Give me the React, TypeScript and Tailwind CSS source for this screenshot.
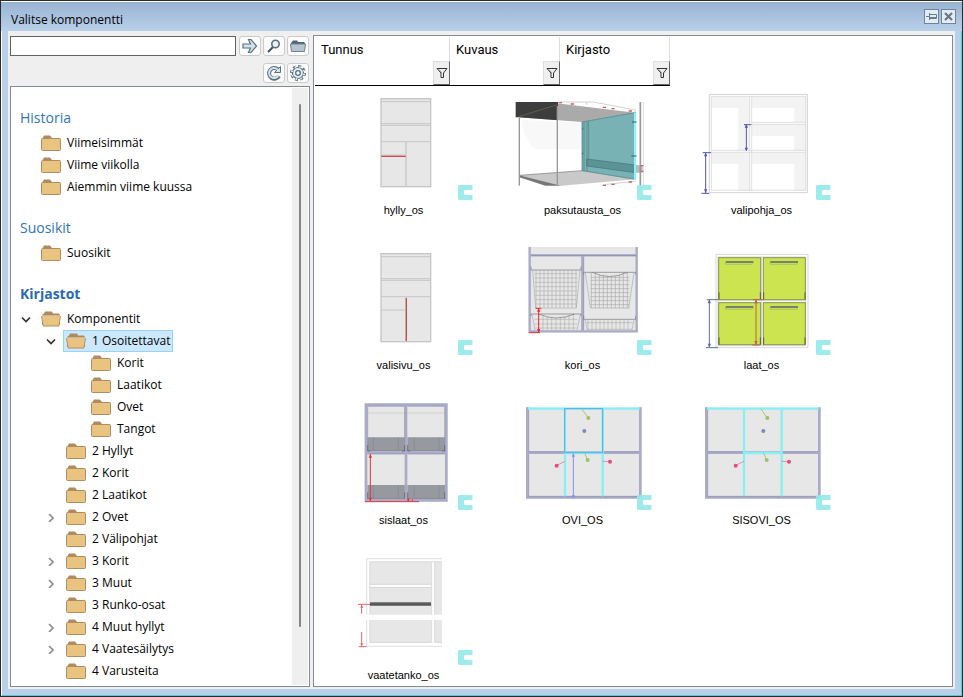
import type { ReactNode } from "react";

type TreeItem = {
  label: string;
  level: 0 | 1 | 2;
  state?: "open" | "closed";
  openFolder?: boolean;
  selected?: boolean;
};

const HISTORY: TreeItem[] = [
  { label: "Viimeisimmät", level: 0 },
  { label: "Viime viikolla", level: 0 },
  { label: "Aiemmin viime kuussa", level: 0 },
];

const FAVOURITES: TreeItem[] = [{ label: "Suosikit", level: 0 }];

const LIBRARIES: TreeItem[] = [
  { label: "Komponentit", level: 0, state: "open", openFolder: true },
  { label: "1 Osoitettavat", level: 1, state: "open", openFolder: true, selected: true },
  { label: "Korit", level: 2 },
  { label: "Laatikot", level: 2 },
  { label: "Ovet", level: 2 },
  { label: "Tangot", level: 2 },
  { label: "2 Hyllyt", level: 1 },
  { label: "2 Korit", level: 1 },
  { label: "2 Laatikot", level: 1 },
  { label: "2 Ovet", level: 1, state: "closed" },
  { label: "2 Välipohjat", level: 1 },
  { label: "3 Korit", level: 1, state: "closed" },
  { label: "3 Muut", level: 1, state: "closed" },
  { label: "3 Runko-osat", level: 1 },
  { label: "4 Muut hyllyt", level: 1, state: "closed" },
  { label: "4 Vaatesäilytys", level: 1, state: "closed" },
  { label: "4 Varusteita", level: 1 },
];

const INDENT = { 0: "pl-[5px]", 1: "pl-[30px]", 2: "pl-[55px]" };

function Folder({ open }: { open?: boolean }) {
  return (
    <svg width="20" height="16" viewBox="0 0 20 16" className="shrink-0">
      {open ? (
        <>
          <path d="M1 14V4L3 2.500L4 .5H11L12 2.500H18L19 4V14Z" fill="#ae8a60" />
          <path d="M0 5.500L1.500 4.500H18.500L20 5.500L18 15.500H2Z" fill="#b18c62" />
          <path d="M1 5.500H19L17.500 14.500H2.500Z" fill="#e9c480" />
          <path d="M1 5H19" stroke="#f6dfb4" />
        </>
      ) : (
        <>
          <path d="M1 4L3 .5H9L11 3H19V5H1Z" fill="#ae8a60" />
          <rect x=".5" y="3.500" width="19" height="12" rx="1" fill="#e9c480" stroke="#b18c62" />
        </>
      )}
    </svg>
  );
}

function Chevron({ state }: { state?: "open" | "closed" }) {
  if (!state) return null;
  return (
    <svg width="10" height="10" viewBox="0 0 10 10" fill="none" strokeWidth="1.7">
      {state === "open" ? (
        <path d="M1 3.500L5 7.500L9 3.500" stroke="#333" />
      ) : (
        <path d="M3 2L7 6L3 10" stroke="#8c8c8c" />
      )}
    </svg>
  );
}

function Tree({ items }: { items: TreeItem[] }) {
  return (
    <ul>
      {items.map((item) => (
        <li key={item.label} className={`flex h-[22px] items-center gap-0.5 ${INDENT[item.level]}`}>
          <span className="flex w-5 justify-center">
            <Chevron state={item.state} />
          </span>
          <button
            type="button"
            className={`flex h-[22px] items-center gap-1.5 border pr-0.5 pl-0.5 whitespace-nowrap ${
              item.selected ? "border-[#99d1ff] bg-[#cce8ff]" : "border-transparent"
            }`}
          >
            <Folder open={item.openFolder} />
            {item.label}
          </button>
        </li>
      ))}
    </ul>
  );
}

function Heading({ bold, children }: { bold?: boolean; children: ReactNode }) {
  return (
    <h2
      className={`flex h-11 items-center pt-4 pl-[9px] ${
        bold ? "text-sm font-bold text-[#2b69b5]" : "text-sm text-[#2f74bd]"
      }`}
    >
      {children}
    </h2>
  );
}

function ToolButton({ label, children }: { label: string; children: ReactNode }) {
  return (
    <button
      type="button"
      aria-label={label}
      className="flex h-5 w-[22px] shrink-0 items-center justify-center rounded-[3px] border border-[#cbcbcb] bg-[#fcfcfc]"
    >
      {children}
    </button>
  );
}

/* Thumbnails are drawn at three units to the pixel. */

function Cabinet({ red }: { red: "shelf" | "side" }) {
  return (
    <g fill="none" stroke="#c6c6c6" strokeWidth="3">
      <rect x="63" y="32" width="149" height="264" fill="#e7e7e7" strokeWidth="4" />
      <path d="M63 41H212M63 107H212M63 112H212M63 161H212" />
      <path d="M138 162V296" strokeWidth="4" />
      <path d="M63 201H138" />
      {red === "shelf" ? (
        <path d="M64 205H137" stroke="#d24a4d" strokeWidth="4" />
      ) : (
        <path d="M139 165V294" stroke="#cf4a50" strokeWidth="4" />
      )}
    </g>
  );
}

const Hylly = () => <Cabinet red="shelf" />;
const Valisivu = () => (
  <g transform="translate(0 9)">
    <Cabinet red="side" />
  </g>
);

const Paksutausta = () => (
  <g>
    <path d="M486 96L666 104V184H526Q496 160 486 110Z" fill="#f8f8f8" />
    <path d="M590 46L826 74L666 102L476 88Z" fill="#aaa" />
    <path d="M467 42H594V97L476 88H467Z" fill="#3d3d3d" />
    <path d="M476 86L592 50" stroke="#75695b" strokeWidth="2" />
    <path d="M478 262L666 248L826 274L604 293H590Z" fill="#c9c9c9" />
    <path d="M478 262L602 293H556L478 268Z" fill="#777" />
    <path d="M478 262L666 248" stroke="#777" strokeWidth="2" />
    <path d="M666 102L826 74V274L666 248Z" fill="#79b2b4" stroke="#3e777a" strokeWidth="2" />
    <path d="M680 213L826 231V254L680 234Z" fill="#5b9396" stroke="#3e777a" strokeWidth="2" />
    <path d="M828 230L848 233V254H828Z" fill="#bababa" />
    <path d="M672 102V248M681 100V250M686 100V214" stroke="#4b8486" strokeWidth="2" />
    <path d="M825 75V276" stroke="#82f6fa" strokeWidth="6" />
    <path d="M478 88V293M592 54V293" stroke="#989898" strokeWidth="4" />
    <path d="M841 42V293" stroke="#999" strokeWidth="5" />
    <path d="M850 42V293" stroke="#ccc" strokeWidth="2" />
    <path d="M600 42H700L826 66V74M680 42V50M730 290L826 280" fill="none" stroke="#bbb" strokeWidth="2" />
    <path d="M816 102H830M814 204H830M668 121V125M668 194V198" stroke="#355f70" strokeWidth="3" />
    <path
      d="M596 44H606M632 48H642M728 58H738M754 62H764M806 69H816M728 292H738M754 289H764M806 282H816M842 233H850M842 250H850"
      stroke="#d65c62"
      strokeWidth="4"
    />
  </g>
);

function Dimension({ d, arrows, color }: { d: string; arrows: string; color: string }) {
  return (
    <>
      <path d={d} fill="none" stroke={color} strokeWidth="3" />
      <path d={arrows} fill={color} stroke="none" />
    </>
  );
}

const Valipohja = () => (
  <g fill="none" stroke="#d2d2d2" strokeWidth="2">
    <path
      d="M64 25H180V188H145V60H64ZM186 25H348V103H313V60H186ZM186 109H348V188H313V144H186ZM64 194H180V308H145V228H64ZM186 194H348V308H313V228H186Z"
      fill="#f3f3f3"
      stroke="none"
    />
    <path d="M58 19H352V314H58Z" strokeWidth="3" />
    <path d="M64 25H347V307H64ZM179 25V307M185 25V307M185 103H347M185 109H347M64 187H347M64 193H347" />
    <Dimension
      color="#5256ac"
      d="M169 110V187M162 110H184M47 194V315M38 194H63M34 316H58"
      arrows="M169 108L174 119H164ZM169 190L174 179H164ZM47 194L52 205H42ZM47 315L52 304H42Z"
    />
  </g>
);

const Kori = () => (
  <g fill="none">
    <rect x="506" y="21" width="326" height="256" fill="#e7e7e7" />
    <path d="M509 21V274H830V21M509 46H830M667 46V274" stroke="#a9abc8" strokeWidth="7" />
    <path d="M513 46H828M671 50V270" stroke="#8284a5" strokeWidth="2" />
    <path
      d="M528 90V204M540 90V204M552 90V204M564 90V204M576 90V204M588 90V204M600 90V204M612 90V204M624 90V204M636 90V204M648 90V204M524 101H652M524 114H652M524 127H652M526 140H650M526 153H650M526 166H650M528 179H650M528 192H650M526 204H650"
      stroke="#b0b0b0"
      strokeWidth="2"
    />
    <path
      d="M694 98V204M706 98V204M718 104V204M730 108V204M742 108V204M754 108V204M766 108V204M778 104V204M790 98V204M802 98V204M692 112H808M692 121H808M692 134H808M692 146H808M692 158H808M692 170H808M692 182H808M692 194H808M692 204H808"
      stroke="#aaa"
      strokeWidth="2"
    />
    <path
      d="M536 222V270M549 225V270M562 230V270M575 232V270M588 234V270M601 232V270M614 230V270M627 225V270M640 222V270M524 238H652M524 252H652M526 264H650M684 240V270M696 240V270M708 240V270M720 240V270M732 240V270M744 240V270M756 240V270M768 240V270M780 240V270M792 240V270M804 240V270M680 248H818M680 268H816"
      stroke="#b0b0b0"
      strokeWidth="2"
    />
    <path
      d="M518 90L527 204M660 90L649 204M676 98L691 204M822 98L806 204M516 224L525 270M661 224L651 270M676 240L682 270M822 240L816 270"
      stroke="#aaa"
      strokeWidth="2"
    />
    <path
      d="M513 80V90H663V80M671 103V97H827V103M697 97Q748 122 802 97M513 228V222H663V228M536 222Q588 246 644 222M671 228V238H827V228"
      stroke="#777"
      strokeWidth="2"
    />
    <Dimension
      color="#f0282d"
      d="M536 206V277M527 205H544M506 278H540"
      arrows="M536 204L541 215H531ZM536 278L541 267H531Z"
    />
  </g>
);

function Drawer({ x, y }: { x: number; y: number }) {
  return (
    <g transform={`translate(${x} ${y})`} fill="none">
      <rect width="126" height="126" fill="#cce450" stroke="#8b9454" strokeWidth="3" />
      <path d="M1 104V126M125 104V126" stroke="#5b6139" strokeWidth="3" />
      <path d="M18 17L24 20H99L103 15" stroke="#b5c95b" strokeWidth="4" />
      <path d="M21 13H104" stroke="#77816f" strokeWidth="6" />
    </g>
  );
}

const Laat = () => (
  <g fill="none">
    <path d="M78 43H354V322H78ZM84 51H347V316H84ZM84 182H347M215 51V316" stroke="#d8d8d8" strokeWidth="3" />
    <Drawer x={86} y={53} />
    <Drawer x={220} y={53} />
    <Drawer x={86} y={188} />
    <Drawer x={220} y={188} />
    <Dimension
      color="#5e6f96"
      d="M58 180V322M50 179H84M48 323H84"
      arrows="M58 178L63 190H53ZM58 323L63 311H53Z"
    />
    <Dimension
      color="#b7673f"
      d="M198 180V314M189 179H221M187 315H209"
      arrows="M198 178L203 190H193ZM198 315L203 303H193Z"
    />
  </g>
);

const Sislaat = () => (
  <g fill="none">
    <rect x="29" y="26" width="248" height="293" fill="#e7e7e7" />
    <path d="M38 54H270" stroke="#c4c4c4" strokeWidth="2" />
    <path d="M37 127H150V169H37ZM157 127H270V169H157ZM37 270H150V312H37ZM157 270H270V312H157Z" fill="#9699a0" />
    <path
      d="M55 127V167M130 127V167M178 127V167M252 127V167M55 270V310M130 270V310M178 270V310M252 270V310M37 167H270M37 310H270"
      stroke="#85888e"
      strokeWidth="2"
    />
    <path d="M33 29H274V316H33ZM153 29V316M33 173H274" stroke="#a9abc8" strokeWidth="8" />
    <path d="M38 34H149V169M158 34H269V169M38 177H149M158 177H269M38 34V169" stroke="#8d8fac" strokeWidth="2" />
    <path d="M38 150V168H46M149 150V168H141M158 150V168H166M269 150V168H261M38 292V311M149 292V311M158 292V311M269 292V311" stroke="#575960" strokeWidth="2" />
    <Dimension
      color="#e33438"
      d="M46 178V318M30 320H192M160 312V320M172 313V318"
      arrows="M46 176L51 188H41ZM46 319L51 308H41ZM160 309L165 316H155Z"
    />
  </g>
);

function Doors({ selected }: { selected?: boolean }) {
  return (
    <g fill="none">
      <rect x="513" y="37" width="346" height="273" fill="#e7e7e7" />
      <path d="M517 37V307H856V37M517 173H856" stroke="#a9abc8" strokeWidth="8" />
      <path d="M521 170H628M746 170H852M521 304H852M521 44V170M521 177V304" stroke="#9193b3" strokeWidth="2" />
      <path d="M519 41H854M630 41V304M743 41V304M630 174H743" stroke="#86f0f3" strokeWidth="7" />
      {selected && (
        <>
          <rect x="629" y="41" width="114" height="132" stroke="#58a8e8" strokeWidth="3" />
          <Dimension color="#8990ee" d="M655 180V310" arrows="M655 174L660 185H650ZM655 312L660 301H650Z" />
        </>
      )}
      <path d="M680 41L700 69M688 173L698 195" stroke="#a6c778" strokeWidth="3" />
      <path d="M605 211L630 199M743 199L765 200" stroke="#d66b8b" strokeWidth="2" />
      <circle cx="700" cy="69" r="6" fill="#9cc467" />
      <circle cx="698" cy="195" r="6" fill="#9cc467" />
      <circle cx="688" cy="108" r="6" fill="#7590b4" />
      <circle cx="605" cy="212" r="6" fill="#e34c7c" />
      <circle cx="765" cy="200" r="6" fill="#e34c7c" />
    </g>
  );
}

const Ovi = () => <Doors selected />;
const Sisovi = () => (
  <g transform="translate(-468 0)">
    <Doors />
  </g>
);

const Vaatetanko = () => (
  <g fill="none">
    <path d="M60 36H244V194H60ZM254 36H276V194H254ZM60 210H244V278H60ZM254 210H276V278H254Z" fill="#e7e7e7" />
    <path d="M60 104H244V111H60Z" fill="#fff" />
    <path
      d="M50 194V26H276M59 194V35H276M245 36V194M254 36V194M59 103H244M59 112H244M50 210V289H276M59 210V277H244M245 210V277M254 210V277H276"
      stroke="#cfcfcf"
      strokeWidth="2"
    />
    <path d="M60 162H243" stroke="#555" strokeWidth="11" />
    <path d="M60 158H243" stroke="#858585" strokeWidth="3" />
    <Dimension
      color="#e56468"
      d="M24 163H60M35 164V191M35 246V289M26 290H50"
      arrows="M35 164L39 174H31ZM35 290L39 280H31Z"
    />
  </g>
);

const COMPONENTS: { name: string; view: string; Art: () => ReactNode }[] = [
  { name: "hylly_os", view: "-81 12 420 324", Art: Hylly },
  { name: "paksutausta_os", view: "456 12 420 324", Art: Paksutausta },
  { name: "valipohja_os", view: "3 12 420 324", Art: Valipohja },
  { name: "valisivu_os", view: "-81 21 420 324", Art: Valisivu },
  { name: "kori_os", view: "456 21 420 324", Art: Kori },
  { name: "laat_os", view: "3 21 420 324", Art: Laat },
  { name: "sislaat_os", view: "-66 21 420 324", Art: Sislaat },
  { name: "OVI_OS", view: "471 21 420 324", Art: Ovi },
  { name: "SISOVI_OS", view: "3 21 420 324", Art: Sisovi },
  { name: "vaatetanko_os", view: "-51 21 420 324", Art: Vaatetanko },
];

const COLUMNS = [
  { label: "Tunnus", width: "w-[135px]" },
  { label: "Kuvaus", width: "w-[110px]" },
  { label: "Kirjasto", width: "w-[110px]" },
];

function FilterIcon() {
  return (
    <svg width="12" height="12" viewBox="0 0 12 12" fill="none">
      <path d="M1 1.500H11L7.500 6V10.500H5V6Z" fill="#eee" stroke="#333" />
      <path d="M3 2.500L5.500 5.500V10" stroke="#999" />
    </svg>
  );
}

export default function App() {
  return (
    <div className="flex h-screen flex-col border border-[#2d2a2e] bg-[#b9d0ea] font-['Open_Sans','Noto_Sans',sans-serif] text-xs text-black">
      <header className="flex h-[30px] shrink-0 items-center justify-between border-t border-white bg-linear-to-b from-[#98b3d2] to-[#b9d0ea] pr-1.5 pl-2.5">
        <h1 className="pt-1.5">Valitse komponentti</h1>
        <div className="flex gap-0.5">
          <button type="button" aria-label="Kiinnitä" className="flex size-[15px] items-center justify-center border border-[#718399] bg-[#e2ecf7]">
            <svg width="11" height="9" viewBox="0 0 11 9" fill="none" stroke="#6b7b8e">
              <path d="M0 4.500H3M3.500 1V8M4 2.500H10.500V6.500H4M4 5.500H10" />
            </svg>
          </button>
          <button type="button" aria-label="Sulje" className="flex size-[15px] items-center justify-center border border-[#718399] bg-[#e2ecf7]">
            <svg width="9" height="9" viewBox="0 0 9 9" stroke="#6b7785" strokeWidth="2.2">
              <path d="M1 1L8 8M8 1L1 8" />
            </svg>
          </button>
        </div>
      </header>

      <div className="flex min-h-0 flex-1 border-r border-b border-[#59c6d8] border-l border-l-white px-1.5 pb-1.5">
        <div className="flex min-w-0 flex-1 bg-[#efefef] pr-0.5 pl-0.5 pt-1 pb-0.5">
          <aside className="flex w-[300px] shrink-0 flex-col">
            <div className="flex flex-wrap justify-end gap-x-0.5 gap-y-[7px] pt-px pr-px pb-[3px]">
              <input
                type="text"
                aria-label="Haku"
                className="mr-px h-5 w-[226px] min-w-0 border border-[#5f6165] bg-white px-1 outline-none"
              />
              <ToolButton label="Hae">
                <svg width="16" height="16" viewBox="0 0 16 16" fill="#d5e2e9" stroke="#587080" strokeWidth="1.2">
                  <path d="M1 6H8.500L6.500 1.500H9L14.500 8L9 14.500H6.500L8.500 10H1Z" />
                </svg>
              </ToolButton>
              <ToolButton label="Etsi">
                <svg width="16" height="16" viewBox="0 0 16 16" fill="none">
                  <path d="M2 14L7 9" stroke="#3e5260" strokeWidth="2" />
                  <circle cx="9.500" cy="6" r="3.700" fill="#eaf1f5" stroke="#587080" strokeWidth="1.600" />
                </svg>
              </ToolButton>
              <ToolButton label="Avaa kansio">
                <svg width="18" height="14" viewBox="0 0 18 14">
                  <path d="M2 6V4L4 1.500H8L9 3H15L16 4V6Z" fill="#4d6575" />
                  <path d="M1.500 5H16.500L15.500 12.500H2.500Z" fill="#b5c4cf" stroke="#6c8494" />
                </svg>
              </ToolButton>
              <div className="flex w-full justify-end gap-0.5">
                <ToolButton label="Päivitä">
                  <svg width="16" height="16" viewBox="0 0 16 16" fill="none">
                    <path d="M13 11A5.300 5.300 0 1 1 12 4.500" stroke="#587080" strokeWidth="4" />
                    <path d="M14.500 1.500V7.500H8.500Z" fill="#d5e2e9" stroke="#587080" />
                    <path d="M12.400 10.500A5 5 0 1 1 12 5" stroke="#d5e2e9" strokeWidth="2" />
                  </svg>
                </ToolButton>
                <ToolButton label="Asetukset">
                  <svg width="18" height="18" viewBox="0 0 18 18" fill="none">
                    <circle cx="9" cy="9" r="6.700" stroke="#587080" strokeWidth="2.600" strokeDasharray="2.900 2.362" />
                    <circle cx="9" cy="9" r="5.500" fill="#e3edf3" stroke="#587080" strokeWidth="1.200" />
                    <circle cx="9" cy="9" r="6.200" stroke="#e3edf3" strokeWidth="2" strokeDasharray="1.400 3.470" strokeDashoffset="-.7" />
                    <circle cx="9" cy="9" r="2.300" fill="#fff" stroke="#587080" strokeWidth="1.300" />
                  </svg>
                </ToolButton>
              </div>
            </div>

            <div className="flex min-h-0 flex-1 overflow-hidden border border-[#838995] bg-white">
              <nav aria-label="Kansiot" className="min-w-0 flex-1 overflow-hidden pt-px">
                <Heading>Historia</Heading>
                <Tree items={HISTORY} />
                <Heading>Suosikit</Heading>
                <Tree items={FAVOURITES} />
                <Heading bold>Kirjastot</Heading>
                <Tree items={LIBRARIES} />
              </nav>
              <div className="my-px mr-px flex w-4 flex-col items-center bg-[#efefef] pt-4">
                <div className="h-[90%] w-0.5 rounded-full bg-[#858585]" />
              </div>
            </div>
          </aside>

          <main className="ml-[3px] min-w-0 flex-1 overflow-hidden border border-[#838995] bg-white">
            <div className="ml-px flex w-max border-b border-black pt-px">
              {COLUMNS.map((col) => (
                <div key={col.label} className={`flex h-12 flex-col justify-between border-r border-[#dedede] ${col.width}`}>
                  <span className="pt-[3px] pl-1.5 font-['Roboto',sans-serif] text-[13px] leading-5">
                    {col.label}
                  </span>
                  <button
                    type="button"
                    aria-label={`Suodata ${col.label}`}
                    className="-mr-px flex h-6 w-[17px] items-center justify-center self-end border border-[#dedede] border-r-[#666] border-b-[#666] bg-[#efefef]"
                  >
                    <FilterIcon />
                  </button>
                </div>
              ))}
            </div>
            <div className="grid grid-cols-[repeat(auto-fill,179px)]">
              {COMPONENTS.map(({ name, view, Art }) => (
                <button
                  key={name}
                  type="button"
                  className="flex h-[155px] flex-col items-center gap-0.5 pt-1.5 font-['Liberation_Sans',Arial,sans-serif] text-[11px] leading-4"
                >
                  <span className="relative mr-px block">
                    <svg width="140" height="108" viewBox={view}>
                      <Art />
                    </svg>
                    <svg width="15" height="15" viewBox="0 0 15 15" className="absolute right-0 bottom-0">
                      <path d="M0 1L1 0H14.500V5H7L6 6V9L7 10H14.500V15H1L0 14Z" fill="#93e9e9" fillOpacity=".9" />
                    </svg>
                  </span>
                  {name}
                </button>
              ))}
            </div>
          </main>
        </div>
      </div>
    </div>
  );
}
